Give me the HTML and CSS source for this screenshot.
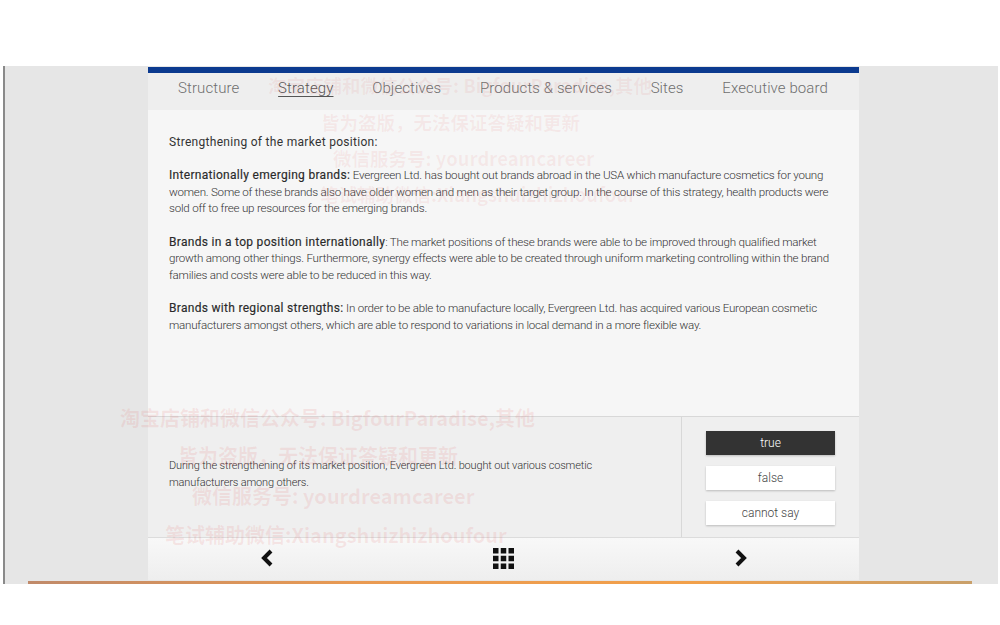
FILE: index.html
```html
<!DOCTYPE html>
<html>
<head>
<meta charset="utf-8">
<link rel="stylesheet" href="styles.css">
</head>
<body>
<div class="top-space"></div>
<div class="stage">
  <div class="panel">
    <div class="topbar"></div>
    <nav class="tabs">
      <span class="tab">Structure</span>
      <span class="tab active">Strategy</span>
      <span class="tab">Objectives</span>
      <span class="tab">Products &amp; services</span>
      <span class="tab">Sites</span>
      <span class="tab">Executive board</span>
    </nav>
    <section class="content">
      <p class="lead">Strengthening of the market position:</p>
      <p><b>Internationally emerging brands:</b> Evergreen Ltd. has bought out brands abroad in the USA which manufacture cosmetics for young women. Some of these brands also have older women and men as their target group. In the course of this strategy, health products were sold off to free up resources for the emerging brands.</p>
      <p><b>Brands in a top position internationally</b>: The market positions of these brands were able to be improved through qualified market growth among other things. Furthermore, synergy effects were able to be created through uniform marketing controlling within the brand families and costs were able to be reduced in this way.</p>
      <p><b>Brands with regional strengths:</b> In order to be able to manufacture locally, Evergreen Ltd. has acquired various European cosmetic manufacturers amongst others, which are able to respond to variations in local demand in a more flexible way.</p>
    </section>
    <section class="question">
      <div class="q-text">During the strengthening of its market position, Evergreen Ltd. bought out various cosmetic manufacturers among others.</div>
      <div class="answers">
        <button class="ans selected">true</button>
        <button class="ans">false</button>
        <button class="ans">cannot say</button>
      </div>
    </section>
    <footer class="nav">
      <div class="nav-cell">
        <svg width="14" height="18" viewBox="0 0 14 18"><path d="M11 2 L4 9 L11 16" fill="none" stroke="#111" stroke-width="4" stroke-linejoin="miter"/></svg>
      </div>
      <div class="nav-cell">
        <svg width="21" height="21" viewBox="0 0 21 21" fill="#111">
          <rect x="0" y="0" width="5.5" height="5.5"/><rect x="7.75" y="0" width="5.5" height="5.5"/><rect x="15.5" y="0" width="5.5" height="5.5"/>
          <rect x="0" y="7.75" width="5.5" height="5.5"/><rect x="7.75" y="7.75" width="5.5" height="5.5"/><rect x="15.5" y="7.75" width="5.5" height="5.5"/>
          <rect x="0" y="15.5" width="5.5" height="5.5"/><rect x="7.75" y="15.5" width="5.5" height="5.5"/><rect x="15.5" y="15.5" width="5.5" height="5.5"/>
        </svg>
      </div>
      <div class="nav-cell">
        <svg width="14" height="18" viewBox="0 0 14 18"><path d="M3 2 L10 9 L3 16" fill="none" stroke="#111" stroke-width="4" stroke-linejoin="miter"/></svg>
      </div>
    </footer>
  </div>
  <div class="orange"></div>
  <div class="wm wm1">
    <div class="l1">淘宝店铺和微信公众号: BigfourParadise,其他</div>
    <div class="l2">皆为盗版，无法保证答疑和更新</div>
    <div class="l3">微信服务号: yourdreamcareer</div>
    <div class="l4">笔试辅助微信:Xiangshuizhizhoufour</div>
  </div>
  <div class="wm wm2">
    <div class="l1">淘宝店铺和微信公众号: BigfourParadise,其他</div>
    <div class="l2">皆为盗版，无法保证答疑和更新</div>
    <div class="l3">微信服务号: yourdreamcareer</div>
    <div class="l4">笔试辅助微信:Xiangshuizhizhoufour</div>
  </div>
</div>
</body>
</html>
```

FILE: styles.css
```css
html, body {
  margin: 0;
  padding: 0;
  background: #ffffff;
  font-family: Roboto, "Liberation Sans", sans-serif;
}
.top-space {
  height: 66px;
}
.stage {
  position: relative;
  margin-left: 3px;
  width: 995px;
  height: 518px;
  background: #e6e6e6;
  border-left: 2px solid #8a8a8a;
  box-sizing: border-box;
}
.panel {
  margin-left: 143px;
  width: 711px;
  display: flex;
  flex-direction: column;
}
.topbar {
  margin-top: 1px;
  height: 6px;
  background: #0b3a8f;
}
.tabs {
  height: 37px;
  box-sizing: border-box;
  background: #eeeeee;
  display: flex;
  align-items: center;
  justify-content: space-between;
  padding: 0 31px 7px 30px;
}
.tab {
  font-size: 15px;
  font-weight: 300;
  color: #6e6e6e;
  letter-spacing: 0.1px;
}
.tab.active {
  text-decoration: underline;
  text-decoration-thickness: 1px;
  text-underline-offset: 3px;
  color: #555;
}
.content {
  height: 306px;
  box-sizing: border-box;
  background: #f6f6f6;
  padding: 24px 24px 0 21px;
  font-size: 11.6px;
  font-weight: 300;
  letter-spacing: -0.22px;
  line-height: 16.6px;
  color: #333;
}
.content p {
  margin: 0 0 16.6px 0;
}
.content .lead {
  font-size: 12px;
  font-weight: 400;
  letter-spacing: 0.3px;
  color: #333;
}
.content b {
  font-weight: 400;
  font-size: 12px;
  color: #2a2a2a;
  letter-spacing: 0.3px;
  -webkit-text-stroke: 0.15px #2a2a2a;
}
.question {
  height: 121px;
  display: flex;
  background: #efefef;
  border-top: 1px solid #d8d8d8;
  box-sizing: border-box;
}
.q-text {
  flex: 1;
  display: flex;
  align-items: center;
  padding: 0 60px 6px 21px;
  font-size: 11px;
  font-weight: 300;
  letter-spacing: -0.15px;
  line-height: 17px;
  color: #333;
}
.answers {
  width: 177px;
  border-left: 1px solid #d8d8d8;
  display: flex;
  flex-direction: column;
  align-items: center;
  justify-content: center;
  gap: 11px;
  padding-top: 1px;
}
.ans {
  width: 129px;
  height: 24px;
  border: none;
  background: #ffffff;
  color: #444;
  font-family: Roboto, "Liberation Sans", sans-serif;
  font-size: 12px;
  font-weight: 300;
  box-shadow: 0 1px 2px rgba(0,0,0,0.22);
  padding: 0;
}
.ans.selected {
  background: #333333;
  color: #ffffff;
}
.nav {
  height: 43px;
  background: linear-gradient(#f8f8f8, #eeeeee);
  border-top: 1px solid #dcdcdc;
  box-sizing: border-box;
  display: grid;
  grid-template-columns: 1fr 1fr 1fr;
}
.nav-cell {
  display: flex;
  align-items: center;
  justify-content: center;
  padding-bottom: 2px;
}
.orange {
  margin: 1px 0 0 23px;
  width: 944px;
  height: 3px;
  background: linear-gradient(90deg, #c08a6a, #e99a52 35%, #f2a04a 70%, #c9a06a);
}
.wm {
  position: absolute;
  font-family: "Noto Sans CJK SC", sans-serif;
  font-weight: 700;
  white-space: nowrap;
  pointer-events: none;
}
.wm div { position: absolute; }
.wm1 { left: 0; top: 0; font-size: 18.5px; color: rgba(225, 90, 90, 0.09); }
.wm1 .l1 { left: 263px; top: 6px; }
.wm1 .l2 { left: 316px; top: 43px; }
.wm1 .l3 { left: 328px; top: 79px; }
.wm1 .l4 { left: 315px; top: 115px; }
.wm2 { left: 0; top: 0; font-size: 20px; color: rgba(225, 90, 90, 0.12); }
.wm2 .l1 { left: 115px; top: 337px; }
.wm2 .l2 { left: 173px; top: 375px; }
.wm2 .l3 { left: 187px; top: 415px; }
.wm2 .l4 { left: 160px; top: 454px; }
```
